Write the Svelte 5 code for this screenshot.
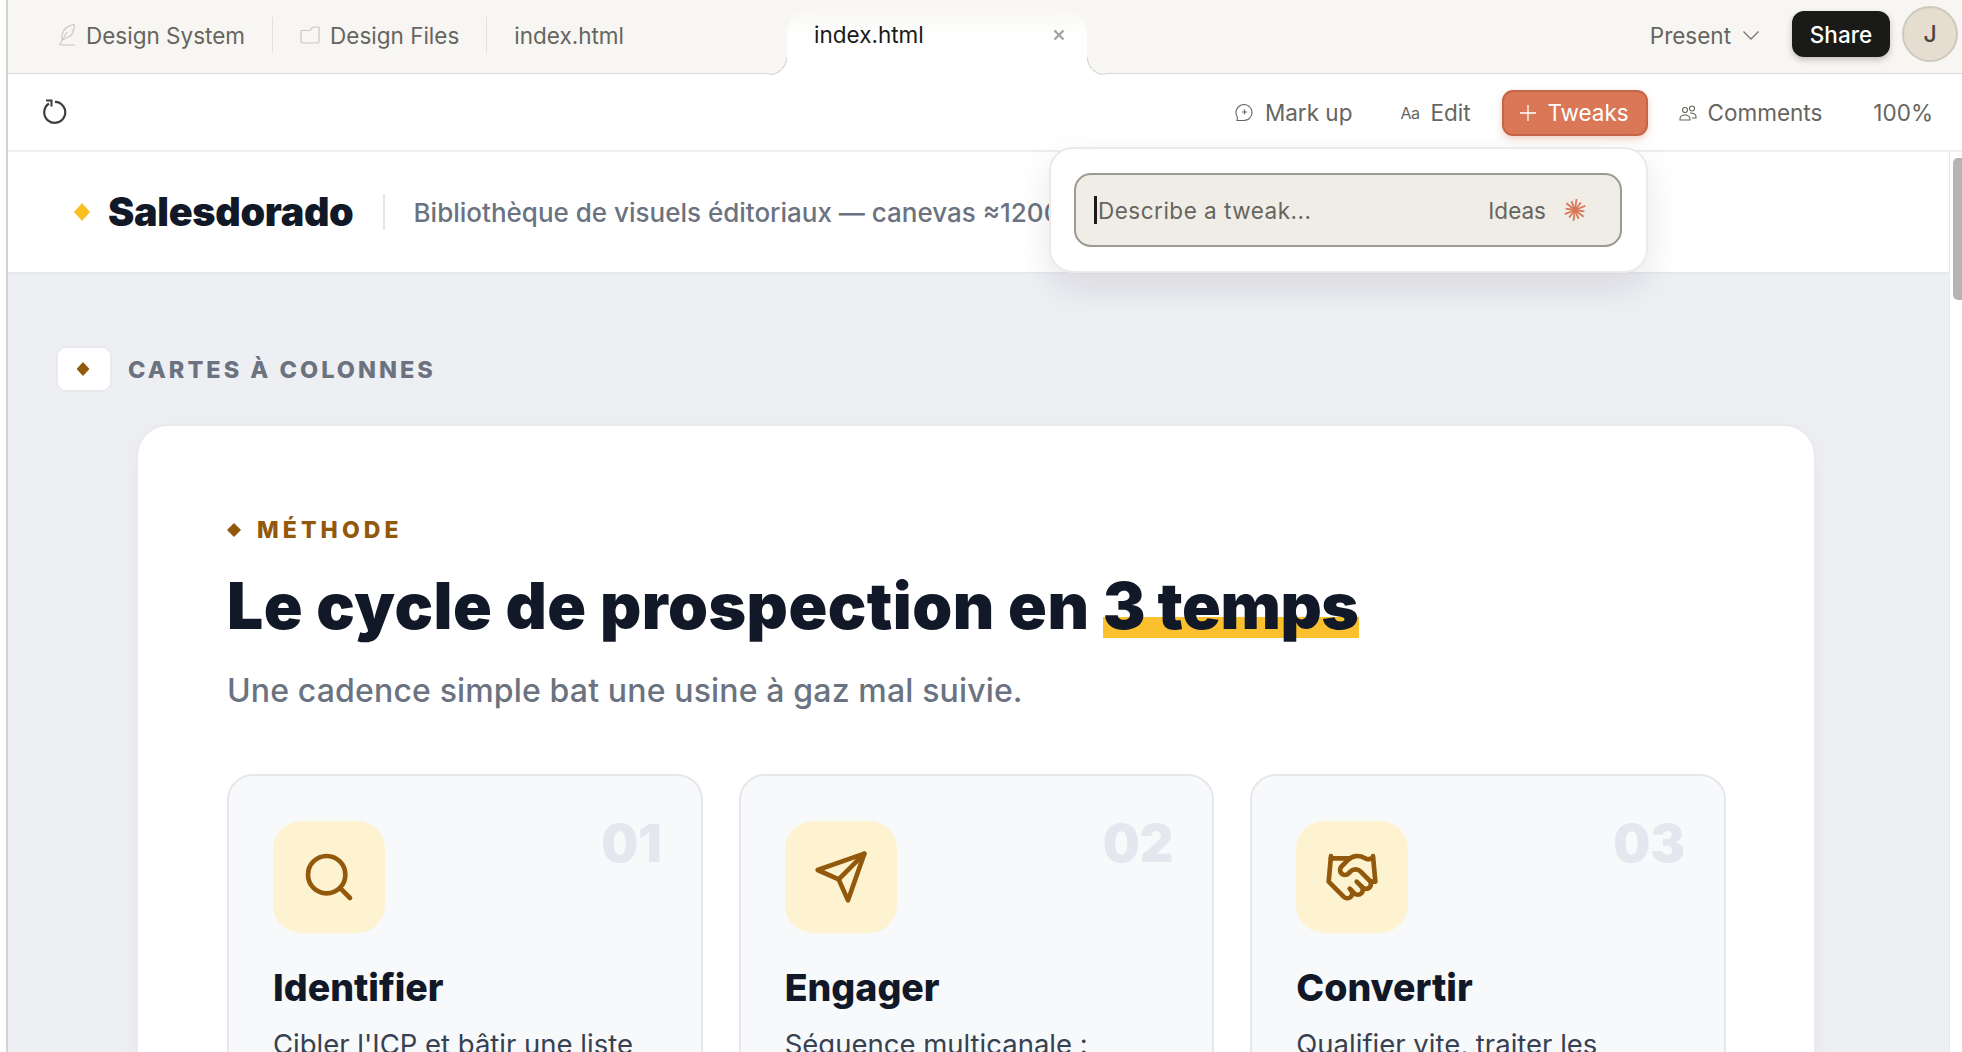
<script lang="ts">
	const steps = [
		{ n: '01', title: 'Identifier', text: "Cibler l'ICP et bâtir une liste", icon: 'search' },
		{ n: '02', title: 'Engager', text: 'Séquence multicanale :', icon: 'send' },
		{ n: '03', title: 'Convertir', text: 'Qualifier vite, traiter les', icon: 'hand' }
	];
	const spokes = Array.from({ length: 12 }, (_, i) => i * 30);
</script>

<div class="page">
	<header class="tabbar">
		<nav class="tabs">
			<span class="tab first">
				<svg class="tab-icon" width="22" height="24" viewBox="0 0 22 24" fill="none" stroke="#c9c7c1" stroke-width="1.1">
					<path d="M5 17c-.8-5 .5-9 4-12 2.500-2 5-3 8-3.500 1 3-.2 5-1.500 6l1 .5c-1 3-2.500 5-5 6l-6.500 3z" />
					<path d="M3 21 10 9" />
					<path d="M2 22c1.500-1.500 2.500 1 4 0s2.500 1 4 0 2.500 1 4 0 2.500 1 4 0" />
				</svg>
				Design System
			</span>
			<span class="tab">
				<svg class="tab-icon" width="20" height="18" viewBox="0 0 20 18" fill="none" stroke="#c9c7c1" stroke-width="1.2">
					<path d="M1 5.500V15a2 2 0 0 0 2 2h14a2 2 0 0 0 2-2V2a1 1 0 0 0-1-1h-4c-1 0-1.500 .4-2.200 1.200L10 4.500H2a1 1 0 0 0-1 1z" />
				</svg>
				Design Files
			</span>
			<span class="tab last">index.html</span>
			<span class="tab-active">
				index.html
				<svg class="close" width="12" height="12" viewBox="0 0 12 12" stroke="#a3a3a0" stroke-width="2.400">
					<path d="M1.500 1.500l9 9M10.500 1.500l-9 9" />
				</svg>
			</span>
		</nav>
		<div class="bar-right">
			<span class="present">
				Present
				<svg width="18" height="10" viewBox="0 0 18 10" fill="none" stroke="#77766f" stroke-width="1.300"><path d="M1.500 1.500 9 9l7.500-7.500" /></svg>
			</span>
			<button class="share">Share</button>
			<span class="avatar">J</span>
		</div>
	</header>

	<div class="toolbar">
		<svg class="reload" width="26" height="28" viewBox="0 0 26 28" fill="none" stroke="#3d3d3a" stroke-width="2.200">
			<path d="M7 7.500a10.500 10.500 0 1 0 6-1.700" />
			<path d="M4 4.500h5.500v6" stroke-width="2" />
		</svg>
		<div class="tools">
			<span class="tool markup">
				<svg width="19" height="19" viewBox="0 0 19 19" fill="none" stroke="#66655f" stroke-width="1.100">
					<path d="M2 17.500h7a8 8 0 1 0-6.500-3.300z" />
					<path d="M9.500 6.500v5M7 9h5" />
				</svg>
				Mark up
			</span>
			<span class="tool edit"><span class="aa">Aa</span>Edit</span>
			<button class="tweaks">
				<svg width="16" height="16" viewBox="0 0 16 16" stroke="#fff" stroke-width="1.300"><path d="M8 0v16M0 8h16" /></svg>
				Tweaks
			</button>
			<span class="tool comments">
				<svg width="18" height="16" viewBox="0 0 18 16" fill="none" stroke="#66655f" stroke-width="1.100">
					<circle cx="6" cy="5" r="2.500" />
					<circle cx="13" cy="3.500" r="2.500" />
					<path d="M1 14c0-2.500 2-4 5-4s5 1.500 5 4v1H1zM11 8c3 0 6 .8 6 3.500v1.500h-4" />
				</svg>
				Comments
			</span>
			<span class="tool zoom">100%</span>
		</div>
	</div>

	<div class="viewport">
		<div class="top">
			<span class="diamond gold"></span>
			<strong class="brand">Salesdorado</strong>
			<span class="sub">Bibliothèque de visuels éditoriaux — canevas ≈1200</span>
		</div>

		<main>
			<div class="section-label">
				<span class="chip"><span class="diamond brown"></span></span>
				<span class="section-text">CARTES À COLONNES</span>
			</div>

			<section class="card">
				<div class="eyebrow"><span class="diamond small"></span>MÉTHODE</div>
				<h1>Le cycle de prospection en <span class="mark">3 temps</span></h1>
				<p class="lead">Une cadence simple bat une usine à gaz mal suivie.</p>

				<div class="columns">
					{#each steps as step}
						<article class="step">
							<div class="step-head">
								<span class="tile">
									<svg width="56" height="56" viewBox="0 0 24 24" fill="none" stroke="#92580c" stroke-width="2" stroke-linecap="round" stroke-linejoin="round">
										{#if step.icon === 'search'}
											<circle cx="11" cy="11" r="8" />
											<path d="m21 21-4.300-4.300" />
										{:else if step.icon === 'send'}
											<path d="M22 2 15 22l-4-9-9-4z" />
											<path d="M22 2 11 13" />
										{:else}
											<path d="m11 17 2 2a1 1 0 1 0 3-3" />
											<path d="m14 14 2.500 2.500a1 1 0 1 0 3-3l-3.880-3.880a3 3 0 0 0-4.240 0l-.88.88a1 1 0 1 1-3-3l2.810-2.810a5.790 5.790 0 0 1 7.060-.87l.47.28a2 2 0 0 0 1.420.25L21 4" />
											<path d="m21 3 1 11h-2" />
											<path d="M3 3 2 14l6.500 6.500a1 1 0 1 0 3-3" />
											<path d="M3 4h8" />
										{/if}
									</svg>
								</span>
								<span class="num">{step.n}</span>
							</div>
							<h2>{step.title}</h2>
							<p>{step.text}</p>
						</article>
					{/each}
				</div>
			</section>
		</main>
	</div>

	<!-- floats over the header, anchored under the Tweaks button -->
	<div class="popover">
		<div class="input">
			<span class="caret"></span>
			<span class="placeholder">Describe a tweak...</span>
			<span class="ideas">Ideas</span>
			<svg class="spark" width="24" height="24" viewBox="0 0 24 24" stroke="#d97757" stroke-width="1.800">
				{#each spokes as a}
					<line x1="12" y1="12" x2="12" y2={a % 60 === 0 ? 1 : 2.500} transform="rotate({a + 8} 12 12)" />
				{/each}
			</svg>
		</div>
	</div>

	<div class="scrollbar"><span class="thumb"></span></div>
</div>

<style>
	:global(body) {
		margin: 0;
		background: #fff;
	}

	.page {
		position: relative;
		display: flex;
		flex-direction: column;
		height: 1052px;
		overflow: hidden;
		margin-left: 6px;
		border-left: 2px solid #d2d2d0;
		font-family: Inter, 'Liberation Sans', sans-serif;
	}

	.tabbar {
		display: flex;
		justify-content: space-between;
		height: 73px;
		flex: none;
		background: #f7f6f2;
		border-bottom: 1px solid #dbd9d3;
	}

	.tabs {
		display: flex;
		align-items: flex-start;
		padding-left: 49px;
		font-size: 22.500px;
		color: #66655f;
	}

	.tab {
		display: flex;
		align-items: center;
		gap: 10px;
		height: 36px;
		margin-top: 17px;
		padding: 0 27px;
		border-right: 1px solid #e3e1db;
	}

	.tab.first {
		gap: 7px;
		padding-left: 0;
	}

	.tab.last {
		border-right: 0;
		padding-right: 0;
	}

	.tab-active {
		position: relative;
		z-index: 1;
		display: flex;
		align-items: center;
		justify-content: space-between;
		width: 300px;
		height: 66px;
		margin: 8px 0 -1px 163px;
		padding: 0 22px 13px 27px;
		box-sizing: border-box;
		border-radius: 26px 26px 0 0;
		background: linear-gradient(#f8f7f4, #fff 45%);
		color: #1a1a18;
	}

	.tab-active::before,
	.tab-active::after {
		content: '';
		position: absolute;
		bottom: -1px;
		width: 18px;
		height: 18px;
	}

	.tab-active::before {
		left: -18px;
		background: radial-gradient(circle at 0 0, #f7f6f2 17px, #dbd9d3 17px, #dbd9d3 18px, #fff 18.500px);
	}

	.tab-active::after {
		right: -18px;
		background: radial-gradient(circle at 100% 0, #f7f6f2 17px, #dbd9d3 17px, #dbd9d3 18px, #fff 18.500px);
	}

	.bar-right {
		display: flex;
		align-items: center;
		padding-right: 4px;
		height: 68px;
	}

	.present {
		display: flex;
		align-items: center;
		gap: 11px;
		margin: 2px 32px 0 0;
		font-size: 22.500px;
		color: #66655f;
	}

	.share {
		width: 98px;
		height: 46px;
		margin-right: 12px;
		padding: 0;
		border: 0;
		border-radius: 12px;
		background: #1a1a18;
		color: #fff;
		font: 450 22.500px Inter, sans-serif;
		box-shadow: 0 3px 6px rgba(0, 0, 0, 0.22);
	}

	.avatar {
		display: grid;
		place-items: center;
		width: 52px;
		height: 52px;
		border: 2px solid #cfc9bc;
		border-radius: 50%;
		background: #e4ddd0;
		color: #4b4740;
		font-size: 23px;
		font-weight: 500;
	}

	.toolbar {
		display: flex;
		align-items: center;
		justify-content: space-between;
		height: 76px;
		flex: none;
		padding: 0 29px 0 34px;
		background: #fff;
		border-bottom: 2px solid #eeeeee;
		font-size: 22.500px;
		color: #66655f;
	}

	.reload {
		margin-top: -4px;
	}

	.tools {
		display: flex;
		align-items: center;
		padding-top: 1px;
	}

	.tool {
		display: flex;
		align-items: center;
		gap: 11px;
	}

	.aa {
		font-size: 16px;
		letter-spacing: -0.5px;
	}

	.markup {
		margin-right: 48px;
	}

	.edit {
		margin-right: 31px;
	}

	.comments {
		margin: 0 51px 0 31px;
	}

	.tweaks {
		display: flex;
		align-items: center;
		justify-content: center;
		gap: 11px;
		width: 146px;
		height: 46px;
		padding: 0;
		border: 2px solid #c4654a;
		border-radius: 11px;
		background: #d97757;
		color: #fff;
		font: 400 22.500px Inter, sans-serif;
		box-shadow: 0 3px 7px rgba(217, 119, 87, 0.35);
	}

	.viewport {
		flex: 1;
		min-height: 0;
		background: #eeeff3;
	}

	.top {
		display: flex;
		align-items: center;
		height: 120px;
		padding: 0 912px 0 66px;
		background: #fff;
		border-bottom: 2px solid #e8e9ed;
	}

	.diamond {
		display: block;
		flex: none;
		clip-path: polygon(50% 0, 100% 50%, 50% 100%, 0 50%);
	}

	.gold {
		width: 16px;
		height: 18px;
		background: #fbbf24;
		margin-right: 18px;
	}

	.brown {
		width: 13px;
		height: 14px;
		margin-right: 2px;
		background: #92580c;
	}

	.small {
		width: 14px;
		height: 14px;
		background: #92580c;
	}

	.brand {
		flex: none;
		font-size: 39.500px;
		font-weight: 900;
		letter-spacing: -0.3px;
		color: #111827;
		padding-right: 29px;
		border-right: 2px solid #e5e7eb;
		line-height: 36px;
	}

	.sub {
		margin-left: 29px;
		min-width: 0;
		overflow: hidden;
		font-size: 26px;
		font-weight: 500;
		white-space: nowrap;
		color: #6b7280;
	}

	main {
		padding: 72px 0 0 48px;
	}

	.section-label {
		display: flex;
		align-items: center;
		gap: 16px;
	}

	.chip {
		display: grid;
		place-items: center;
		width: 52px;
		height: 42px;
		border: 2px solid #e8e9ed;
		border-radius: 10px;
		background: #fff;
	}

	.section-text {
		font-size: 23.500px;
		font-weight: 800;
		letter-spacing: 3px;
		color: #6b7280;
	}

	.card {
		width: 1676px;
		height: 700px;
		box-sizing: border-box;
		margin: 34px 0 0 82px;
		padding: 91px 88px 0 89px;
		background: #fff;
		border-radius: 30px;
		box-shadow: 0 0 0 2px #e9eaee, 0 6px 30px rgba(17, 24, 39, 0.04);
	}

	.eyebrow {
		display: flex;
		align-items: center;
		gap: 16px;
		font-size: 23px;
		font-weight: 800;
		letter-spacing: 4.100px;
		line-height: 26px;
		color: #92580c;
	}

	h1 {
		margin: 25px 0 0;
		font-size: 64px;
		font-weight: 900;
		letter-spacing: 0.5px;
		line-height: 76px;
		color: #111827;
		white-space: nowrap;
	}

	.mark {
		letter-spacing: -0.4px;
		background: linear-gradient(#fbc02d, #fbc02d) no-repeat 0 calc(100% - 6px) / 100% 21px;
	}

	.lead {
		margin: 27px 0 0;
		font-size: 32px;
		font-weight: 500;
		letter-spacing: 0.15px;
		line-height: 40px;
		color: #6b7280;
	}

	.columns {
		display: grid;
		grid-template-columns: repeat(3, 1fr);
		gap: 36px;
		margin-top: 63px;
	}

	.step {
		box-sizing: border-box;
		height: 400px;
		padding: 45px 44px;
		background: #f8f9fb;
		border: 2px solid #e5e7eb;
		border-radius: 26px;
	}

	.step-head {
		display: flex;
		justify-content: space-between;
	}

	.tile {
		display: grid;
		place-items: center;
		width: 112px;
		height: 112px;
		border-radius: 28px;
		background: #fef3d0;
	}

	.num {
		margin-right: -5px;
		font-size: 52px;
		font-weight: 900;
		line-height: 46px;
		color: #e5e7ee;
	}

	h2 {
		margin: 32px 0 0;
		font-size: 37.500px;
		font-weight: 800;
		line-height: 46px;
		color: #111827;
	}

	.step p {
		margin: 14px 0 0;
		font-size: 27.500px;
		line-height: 38px;
		color: #374151;
	}

	.popover {
		position: absolute;
		left: 1041px;
		top: 147px;
		box-sizing: border-box;
		width: 599px;
		height: 126px;
		padding: 24px 24px 24px 23px;
		background: #fff;
		border: 2px solid #eceae6;
		border-radius: 24px;
		box-shadow: 0 14px 36px rgba(17, 24, 39, 0.1);
	}

	.input {
		display: flex;
		align-items: center;
		height: 74px;
		box-sizing: border-box;
		padding: 0 33px 0 18px;
		background: #f0ede6;
		border: 2px solid #9d9a92;
		border-radius: 17px;
		font-size: 22.500px;
		color: #66655f;
	}

	.caret {
		width: 3px;
		height: 28px;
		margin-right: 1px;
		background: #1a1a18;
	}

	.placeholder {
		flex: 1;
		letter-spacing: 0.5px;
	}

	.ideas {
		margin-right: 17px;
	}

	.scrollbar {
		position: absolute;
		right: 0;
		top: 152px;
		bottom: 0;
		width: 12px;
		border-left: 1px solid #e8e8e8;
		background: #fff;
	}

	.thumb {
		display: block;
		height: 142px;
		margin: 6px 0 0 3px;
		border-radius: 5px 0 0 5px;
		background: #b5b5b5;
	}
</style>
